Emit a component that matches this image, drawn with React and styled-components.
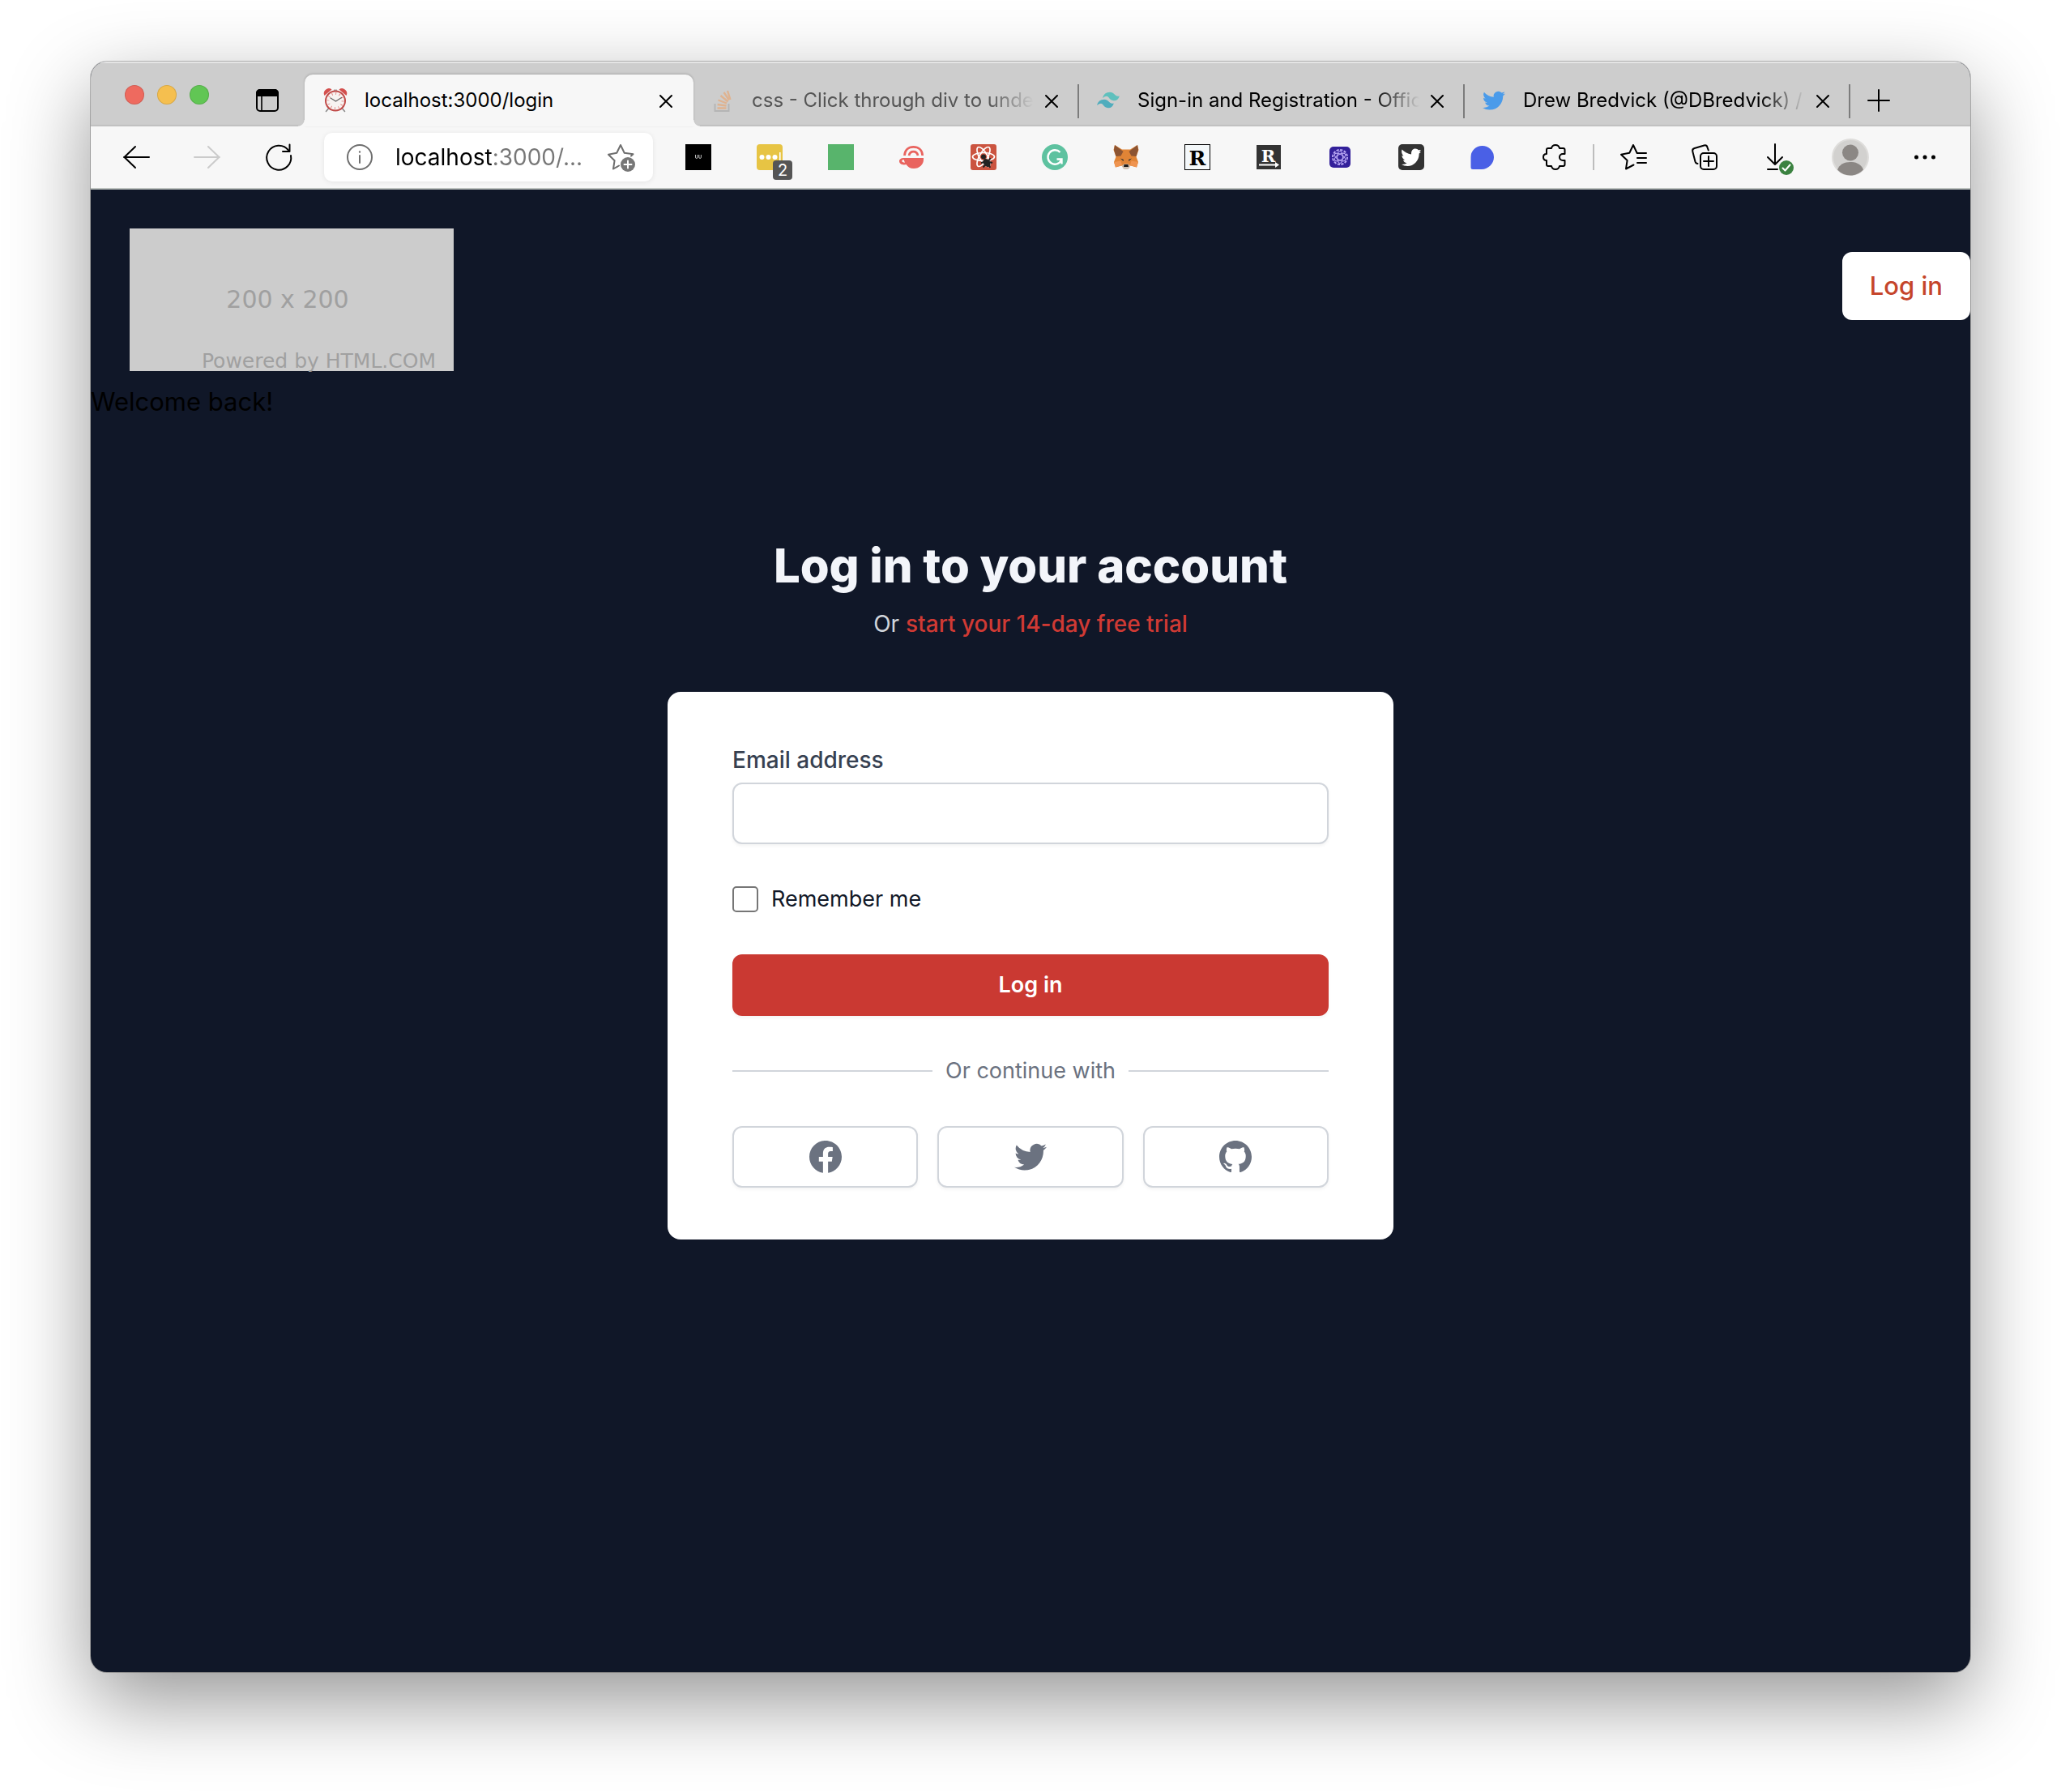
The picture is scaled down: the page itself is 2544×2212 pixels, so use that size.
import React from 'react';
import styled, { createGlobalStyle, css } from 'styled-components';

const GlobalStyle = createGlobalStyle`
  *, *::before, *::after { box-sizing: border-box; }
  body {
    margin: 0;
    background: #fff;
    font-family: Inter, 'Liberation Sans', sans-serif;
    -webkit-font-smoothing: antialiased;
  }
  button, input { font-family: inherit; }
  svg { display: block; flex: none; overflow: visible; }
`;

/* ---------- window ---------- */

const Desktop = styled.div`
  min-height: 100vh;
  padding: 76px 112px 148px;
  display: flex;
  flex-direction: column;
`;

const Window = styled.div`
  flex: 1;
  display: flex;
  flex-direction: column;
  border-radius: 20px;
  overflow: hidden;
  background: #101728;
  box-shadow: 0 0 0 1px rgba(0, 0, 0, 0.24), 0 36px 100px rgba(0, 0, 0, 0.42);
`;

const plainButton = css`
  appearance: none;
  border: 0;
  padding: 0;
  background: none;
  color: inherit;
  cursor: pointer;
`;

/* ---------- tab strip ---------- */

const TabStrip = styled.div`
  height: 80px;
  display: flex;
  align-items: center;
  padding-left: 42px;
  background: #cdcdcd;
  box-shadow: inset 0 2px 0 #e4e4e4, inset 0 -2px 2px -1px #b4b4b4;
`;

const TrafficLights = styled.div`
  display: flex;
  gap: 16px;
  margin: 2px 26px 0 0;
`;

const Light = styled.button`
  ${plainButton}
  width: 24px;
  height: 24px;
  border-radius: 50%;
  background: ${(p) => p.$color};
  box-shadow: inset 0 0 0 1px rgba(0, 0, 0, 0.12);
`;

const StripButton = styled.button`
  ${plainButton}
  display: flex;
  align-items: center;
  justify-content: center;
  align-self: flex-end;
  width: ${(p) => p.$width}px;
  height: 64px;
`;

const Tab = styled.div`
  position: relative;
  align-self: flex-end;
  flex: 0 1 476px;
  min-width: 0;
  height: 64px;
  display: flex;
  align-items: center;
  padding: 0 26px 0 20px;

  ${(p) =>
    p.$divider &&
    css`
      &::after {
        content: '';
        position: absolute;
        right: 0;
        top: 12px;
        width: 2px;
        height: 42px;
        background: #7c7c7c;
      }
    `}

  ${(p) =>
    p.$active &&
    css`
      flex-basis: 480px;
      padding: 0 26px 0 22px;
      background: #f7f7f7;
      border-radius: 10px 10px 0 0;
      box-shadow: 0 -1px 3px rgba(0, 0, 0, 0.18);

      &::before,
      &::after {
        content: '';
        position: absolute;
        bottom: 0;
        width: 8px;
        height: 8px;
      }
      &::before {
        left: -8px;
        background: radial-gradient(circle at 0 0, transparent 7px, #f7f7f7 8px);
      }
      &::after {
        right: -8px;
        background: radial-gradient(circle at 100% 0, transparent 7px, #f7f7f7 8px);
      }
    `}
`;

const TabTitle = styled.button`
  ${plainButton}
  flex: 1;
  min-width: 0;
  margin: 0 14px 0 20px;
  overflow: hidden;
  white-space: nowrap;
  text-align: left;
  font-size: 24px;
  line-height: 32px;
  color: ${(p) => (p.$muted ? '#555' : '#000')};
  ${(p) =>
    p.$fade &&
    css`
      mask-image: linear-gradient(to right, #000 calc(100% - 56px), transparent);
    `}
`;

const CloseButton = styled.button`
  ${plainButton}
  padding-top: 2px;
`;

/* ---------- toolbar ---------- */

const Toolbar = styled.div`
  height: 78px;
  display: flex;
  align-items: center;
  padding: 0 12px;
  background: #f7f7f7;
  border-bottom: 2px solid #bcc1be;
`;

const ToolButton = styled.button`
  ${plainButton}
  position: relative;
  flex: 0 0 ${(p) => (p.$wide ? 96 : 88)}px;
  height: 64px;
  display: flex;
  align-items: center;
  justify-content: center;
  color: ${(p) => (p.$dim ? '#cbcbcb' : '#000')};
`;

const CountBadge = styled.span`
  position: absolute;
  left: 48px;
  top: 36px;
  width: 24px;
  height: 24px;
  border-radius: 4px;
  background: #555;
  color: #fff;
  font-size: 20px;
  line-height: 24px;
  text-align: center;
`;

const AddressBar = styled.div`
  flex: 1;
  min-width: 200px;
  height: 60px;
  margin: 0 12px;
  padding: 0 24px 0 28px;
  display: flex;
  align-items: center;
  border-radius: 10px;
  background: #fff;
  box-shadow: 0 1px 6px rgba(0, 0, 0, 0.08);
  color: #6e6e6e;
`;

const AddressInput = styled.input`
  flex: 1;
  min-width: 0;
  margin: 0 16px 0 28px;
  padding: 0;
  border: 0;
  outline: 0;
  font-size: 28px;
  line-height: 40px;
  color: #000;
  background: linear-gradient(to right, #000 121px, #777 121px);
  background-clip: text;
  -webkit-text-fill-color: transparent;
`;

const Separator = styled.span`
  flex: none;
  width: 2px;
  height: 32px;
  margin: 0 4px;
  background: #bdbdbd;
`;

/* ---------- page ---------- */

const Header = styled.header`
  display: flex;
  align-items: center;
  justify-content: space-between;
  height: 238px;
  padding-left: 48px;
`;

const Placeholder = styled.div`
  display: flex;
  flex-direction: column;
  justify-content: flex-end;
  width: 400px;
  height: 176px;
  margin-top: 34px;
  background: #ccc;
  color: #a0a0a0;
  font-family: 'DejaVu Sans', sans-serif;
`;

const PlaceholderSize = styled.span`
  padding-right: 10px;
  font-size: 30px;
  line-height: 32px;
  text-align: center;
`;

const PlaceholderCredit = styled.span`
  margin-top: 48px;
  padding-right: 22px;
  font-size: 25px;
  line-height: 24px;
  text-align: right;
`;

const HeaderLink = styled.a`
  padding: 18px 34px;
  border-radius: 12px;
  background: #fff;
  color: #c5452b;
  font-size: 31px;
  line-height: 48px;
  font-weight: 500;
  text-decoration: none;
`;

const Welcome = styled.p`
  margin: 0;
  font-size: 31px;
  line-height: 48px;
  color: #000;
`;

const Main = styled.main`
  padding: 142px 64px 96px;
`;

const Title = styled.h1`
  margin: 0;
  text-align: center;
  font-size: 58px;
  line-height: 72px;
  font-weight: 800;
  color: #f3f5fa;
`;

const Subtitle = styled.p`
  margin: 16px 0 64px;
  text-align: center;
  font-size: 28px;
  line-height: 40px;
  color: #d1d5db;
`;

const TrialLink = styled.a`
  font-weight: 500;
  color: #d03a34;
  text-decoration: none;
`;

const Card = styled.section`
  max-width: 896px;
  margin: 0 auto;
  padding: 64px 80px;
  border-radius: 16px;
  background: #fff;
`;

const Label = styled.label`
  display: block;
  margin-bottom: 8px;
  font-size: 28px;
  line-height: 40px;
  font-weight: 500;
  color: #374151;
`;

const boxed = css`
  border: 2px solid #d1d5db;
  border-radius: 12px;
  background: #fff;
  box-shadow: 0 2px 4px rgba(0, 0, 0, 0.05);
`;

const TextInput = styled.input`
  ${boxed}
  display: block;
  width: 100%;
  height: 76px;
  padding: 16px 24px;
  font-size: 28px;
`;

const CheckRow = styled.div`
  display: flex;
  align-items: center;
  gap: 16px;
  margin: 48px 0;
`;

const Checkbox = styled.input`
  appearance: none;
  width: 32px;
  height: 32px;
  margin: 0;
  border: 2px solid #767676;
  border-radius: 5px;
  background: #fff;
`;

const CheckLabel = styled.label`
  font-size: 27px;
  line-height: 40px;
  color: #111827;
`;

const Submit = styled.button`
  ${plainButton}
  display: block;
  width: 100%;
  height: 76px;
  border-radius: 12px;
  background: #ca3932;
  box-shadow: 0 2px 4px rgba(0, 0, 0, 0.05);
  color: #fff;
  font-size: 27px;
  line-height: 40px;
  font-weight: 600;
`;

const OrRule = styled.div`
  display: flex;
  align-items: center;
  gap: 16px;
  margin: 48px 0;
  font-size: 27px;
  line-height: 40px;
  color: #6b7280;

  &::before,
  &::after {
    content: '';
    flex: 1;
    height: 2px;
    background: #d1d5db;
  }
`;

const SocialRow = styled.div`
  display: grid;
  grid-template-columns: repeat(3, 1fr);
  gap: 24px;
`;

const SocialLink = styled.a`
  ${boxed}
  height: 76px;
  display: flex;
  align-items: center;
  justify-content: center;
  color: #6b7280;
`;

/* ---------- icons ---------- */

const Svg = ({ size = 32, box = 32, children, ...rest }) => (
  <svg width={size} height={size} viewBox={`0 0 ${box} ${box}`} fill="none" aria-hidden="true" {...rest}>
    {children}
  </svg>
);

const Line = (props) => (
  <Svg stroke="currentColor" strokeWidth="2" strokeLinecap="round" strokeLinejoin="round" {...props} />
);

const BIRD =
  'M6.29 18.251c7.547 0 11.675-6.253 11.675-11.675 0-.178 0-.355-.012-.53A8.348 8.348 0 0020 3.92a8.19 8.19 0 01-2.357.646 4.118 4.118 0 001.804-2.27 8.224 8.224 0 01-2.605.996 4.107 4.107 0 00-6.993 3.743 11.65 11.65 0 01-8.457-4.287 4.106 4.106 0 001.27 5.477A4.073 4.073 0 01.8 7.713v.052a4.105 4.105 0 003.292 4.022 4.095 4.095 0 01-1.853.07 4.108 4.108 0 003.834 2.85A8.233 8.233 0 010 16.407a11.616 11.616 0 006.29 1.84';

const FacebookIcon = () => (
  <Svg size={40} box={20}>
    <path
      fill="currentColor"
      fillRule="evenodd"
      d="M20 10c0-5.523-4.477-10-10-10S0 4.477 0 10c0 4.991 3.657 9.128 8.438 9.878v-6.987h-2.54V10h2.54V7.797c0-2.506 1.492-3.89 3.777-3.89 1.094 0 2.238.195 2.238.195v2.46h-1.26c-1.243 0-1.63.771-1.63 1.562V10h2.773l-.443 2.89h-2.33v6.988C16.343 19.128 20 14.991 20 10z"
    />
  </Svg>
);

const TwitterIcon = () => (
  <Svg size={40} box={20}>
    <path fill="currentColor" d={BIRD} />
  </Svg>
);

const GithubIcon = () => (
  <Svg size={40} box={20}>
    <path
      fill="currentColor"
      fillRule="evenodd"
      d="M10 0C4.477 0 0 4.484 0 10.017c0 4.425 2.865 8.18 6.839 9.504.5.092.682-.217.682-.483 0-.237-.008-.868-.013-1.703-2.782.605-3.369-1.343-3.369-1.343-.454-1.158-1.11-1.466-1.11-1.466-.908-.62.069-.608.069-.608 1.003.07 1.531 1.032 1.531 1.032.892 1.53 2.341 1.088 2.91.832.092-.647.35-1.088.636-1.338-2.22-.253-4.555-1.113-4.555-4.951 0-1.093.39-1.988 1.029-2.688-.103-.253-.446-1.272.098-2.65 0 0 .84-.27 2.75 1.026A9.564 9.564 0 0110 4.844c.85.004 1.705.115 2.504.337 1.909-1.296 2.747-1.027 2.747-1.027.546 1.379.203 2.398.1 2.651.64.7 1.028 1.595 1.028 2.688 0 3.848-2.339 4.695-4.566 4.942.359.31.678.921.678 1.856 0 1.338-.012 2.419-.012 2.747 0 .268.18.58.688.482A10.019 10.019 0 0020 10.017C20 4.484 15.522 0 10 0z"
    />
  </Svg>
);

const SidebarIcon = () => (
  <Line size={28} box={28}>
    <rect x="1" y="1" width="26" height="26" rx="4" />
    <path d="M1 8V5a4 4 0 0 1 4-4h18a4 4 0 0 1 4 4v3z" fill="currentColor" />
    <path d="M7 8v19" strokeWidth="1.6" />
  </Line>
);

const CloseIcon = () => (
  <Line size={16} box={16}>
    <path d="M1 1l14 14M15 1L1 15" />
  </Line>
);

const PlusIcon = () => (
  <Line size={28} box={28}>
    <path d="M14 1v26M1 14h26" />
  </Line>
);

const ClockIcon = () => (
  <Svg>
    <path d="M7.500 26l-3 3.500M24.500 26l3 3.500" stroke="#8a8a8a" strokeWidth="1.600" strokeLinecap="round" />
    <path d="M2.500 10a6 6 0 0 1 9-7.500zM29.500 10a6 6 0 0 0-9-7.500z" fill="#d4504e" />
    <path d="M14 2.500h4v3h-4z" fill="#a9a3a2" />
    <circle cx="16" cy="16.500" r="12" fill="#f7f3f1" stroke="#c04a48" strokeWidth="2" />
    <circle cx="16" cy="16.500" r="9" stroke="#e08583" strokeWidth="3" strokeDasharray=".9 3.810" />
    <path d="M10 13l6.500 4 7-4.500" stroke="#666" strokeWidth="1.200" strokeLinecap="round" />
  </Svg>
);

const StackIcon = () => (
  <Svg>
    <path d="M6.500 20v9h17v-9" stroke="#b5b5b5" strokeWidth="2" />
    <g stroke="#dfb391" strokeWidth="2.4">
      <path d="M9.500 25.500h11M9.600 21l11 1.500M10.500 15.500l10.500 4M13.500 10l9 7.500M17.500 6l6.500 9.500M22 4l3.500 11" />
    </g>
  </Svg>
);

const TailwindIcon = () => (
  <Svg>
    <path
      d="M9 13q1.800-7.200 9-7.200c5.400 0 5.400 4.500 10 5 1 .1 1.700-.2 2-.6q-2 6.500-7.500 6-4-.5-6-4t-7.500.8z"
      fill="#5fc0bd"
    />
    <path
      d="M2 22q1.800-7.200 9-7.200c5.400 0 5.400 4.500 10 5 1 .1 1.700-.2 2-.6q-2 6.500-7.500 6-4-.5-6-4t-7.500.8z"
      fill="#50adbd"
    />
  </Svg>
);

const BlueBirdIcon = () => (
  <Svg box={22.8}>
    <g transform="translate(1.400 1.400)">
      <path fill="#4a9bea" d={BIRD} />
    </g>
  </Svg>
);

const BackIcon = () => (
  <Line>
    <path d="M1 16h31M15 3L1.500 16 15 29" />
  </Line>
);

const ForwardIcon = () => (
  <Line>
    <path d="M0 16h31M17 3l13.500 13L17 29" />
  </Line>
);

const ReloadIcon = () => (
  <Line>
    <path d="M31 14A15 15 0 1 1 28 7.400" />
    <path d="M29.500.500V9H21" />
  </Line>
);

const InfoIcon = () => (
  <Line>
    <circle cx="16" cy="16" r="15" />
    <path d="M16 14v9" />
    <circle cx="16" cy="9.500" r=".6" fill="currentColor" strokeWidth="1.200" />
  </Line>
);

const AddFavoriteIcon = () => (
  <Line>
    <path d="M14 26.500L7 30.500l1.600-10.300L1 12.700l10.300-2L16 1l4.700 9.700L31.500 12.300 29 14.500" />
    <circle cx="25" cy="25" r="9" fill="#777" stroke="none" />
    <path d="M25 20.500v9M20.500 25h9" stroke="#fff" />
  </Line>
);

const BlackIcon = () => (
  <Svg>
    <path fill="#000" d="M0 0h32v32H0z" />
    <path d="M12.500 13v3q0 1.500 1.300 1.500t1.300-1.500v-3M16.800 13v3q0 1.500 1.300 1.500t1.300-1.500v-3" stroke="#bbb" strokeWidth="1" />
  </Svg>
);

const PasswordIcon = () => (
  <Svg>
    <rect width="32" height="32" rx="4" fill="#e7c444" />
    <g fill="#fff">
      <circle cx="6.500" cy="16" r="3" />
      <circle cx="14.500" cy="16" r="3" />
      <circle cx="22.500" cy="16" r="3" />
      <path d="M28 10h1.600v12H28z" />
    </g>
  </Svg>
);

const GreenIcon = () => (
  <Svg>
    <path fill="#58b46c" d="M0 0h32v32H0z" />
  </Svg>
);

const CoffeeIcon = () => (
  <Svg>
    <path d="M6.500 14C7 7 11.500 3.400 17.500 3.400S28.300 7 28.700 14M12 14c.8-3.600 2.800-4.800 5.500-4.800S22.200 10.400 23 14" stroke="#e9645f" strokeWidth="2.800" />
    <path d="M6 17h24v2c0 6-5 11-12 11-4.500 0-7.500-2-9.500-5-4 1.200-8.500-.5-8.500-4 0-2.500 2.500-4 6-4z" fill="#e9645f" />
    <path d="M5.500 19c-3 .3-3.500 3.500 1.500 3.800z" fill="#f7f7f7" />
  </Svg>
);

const ReactBugIcon = () => (
  <Svg>
    <rect width="32" height="32" rx="3" fill="#cb5440" />
    <g stroke="#fff" strokeWidth="1.700">
      <ellipse cx="16" cy="15.500" rx="13.500" ry="5" />
      <ellipse cx="16" cy="15.500" rx="13.500" ry="5" transform="rotate(60 16 15.500)" />
      <ellipse cx="16" cy="15.500" rx="13.500" ry="5" transform="rotate(120 16 15.500)" />
    </g>
    <circle cx="16" cy="15.500" r="3" fill="#222" />
    <ellipse cx="20" cy="23" rx="4" ry="5.500" transform="rotate(-35 20 23)" fill="#222" />
    <path d="M13 23l4-1M15.500 28.500l3-3.500M24.500 17l-2 3.500M27 23l-4-1M22.500 24l1.500 5" stroke="#222" strokeWidth="2" />
  </Svg>
);

const GrammarlyIcon = () => (
  <Svg>
    <circle cx="16" cy="16" r="16" fill="#5ec2a0" />
    <path d="M22.500 10A8.700 8.700 0 1 0 24 19.800M18.500 18.500H24.500V24.500" stroke="#fff" strokeWidth="2.400" />
  </Svg>
);

const FoxIcon = () => (
  <Svg>
    <path d="M2 1l9 5.500h10L30 1l1.500 6-3 8.500L31 22l-2 6.500-7.500-2L18.500 30h-5l-3-3.500-7.500 2L1 22l2.500-6.500L.5 7z" fill="#e08436" />
    <path d="M2 1l10.500 8-3 5.500-6 .5L1 7zM30 1L19.500 9l3 5.500 6 .5L31 7z" fill="#8c5432" />
    <path d="M1 22l8.500-1.500L11 26l-8 2.500zM31 22l-8.500-1.500L21 26l8 2.500z" fill="#ef9450" />
    <path d="M9 17.500l4 1.500-.5 2zM23 17.500L19 19l.5 2z" fill="#333" />
    <path d="M11 26.500l2.500-2h5l2.500 2-1 3-2 1.500h-4L12 29.500z" fill="#d0c2b4" />
    <path d="M13.500 25h5l.5 3h-6z" fill="#1c1c1c" />
  </Svg>
);

const letterStyle = { fontFamily: "'DejaVu Serif', serif", fontWeight: 700 };

const ReaderIcon = () => (
  <Svg>
    <rect x=".5" y=".5" width="31" height="31" fill="#f4f8fa" stroke="#000" />
    <text x="16" y="25.500" textAnchor="middle" fontSize="25" fill="#000" style={letterStyle}>R</text>
  </Svg>
);

const ReaderArrowIcon = () => (
  <Svg>
    <rect x="1" y="1" width="30" height="30" fill="#333" />
    <text x="15.500" y="21.500" textAnchor="middle" fontSize="21" fill="#fff" style={letterStyle}>R</text>
    <path d="M4 25.500h21" stroke="#fff" strokeWidth="2" />
    <path d="M24 22l5 3.500-5 3.500z" fill="#fff" />
  </Svg>
);

const GlobeIcon = () => (
  <Svg>
    <rect x="3" y="3" width="26" height="26" rx="5" fill="#33209a" />
    <g stroke="#b9a8f5" strokeWidth="1.100">
      <circle cx="16" cy="16" r="9" strokeDasharray="3.200 1.500" strokeWidth="2" />
      <ellipse cx="16" cy="16" rx="7.500" ry="3.500" transform="rotate(30 16 16)" />
      <ellipse cx="16" cy="16" rx="7.500" ry="3.500" transform="rotate(90 16 16)" />
      <ellipse cx="16" cy="16" rx="7.500" ry="3.500" transform="rotate(150 16 16)" />
    </g>
  </Svg>
);

const DarkBirdIcon = () => (
  <Svg>
    <rect width="32" height="32" rx="5" fill="#333" />
    <path
      d="M4.500 6.500c3.500 3.500 7 5 11.500 6-.3-4.500 2-7 5-7 1.800 0 3 .8 3.700 1.800l3.300-.3-2 2.300 2 .5-2.300 1.700C25.500 21 19 27 11.500 27c-3 0-5.500-.8-7.500-2 3 .2 5-.6 6.500-1.700-2.500-.5-4-2-4.500-3.800h2.200C5.500 18 4.500 16 4.500 14l2 .5C4.300 12.500 3.500 9 4.500 6.500z"
      fill="#fff"
    />
  </Svg>
);

const BlobIcon = () => (
  <Svg>
    <path d="M1.500 28.500V16A14 14 0 0 1 15.500 2 14.200 14.200 0 0 1 30 16C30 24 23 31 15 31H4a2.500 2.500 0 0 1-2.500-2.500z" fill="#4a60e6" />
  </Svg>
);

const PuzzleIcon = () => (
  <Line>
    <path d="M13 5C13.600 2.500 15.500 1 18 1s4.400 1.500 5 4h4.500a2 2 0 0 1 2 2v5H27a4 4 0 0 0 0 8h2.500v5a2 2 0 0 1-2 2H23c-.6 2.500-2.500 4-5 4s-4.400-1.500-5-4H9a2 2 0 0 1-2-2v-5c-2.500 0-4-1.800-4-4s1.500-4 4-4V7a2 2 0 0 1 2-2z" />
  </Line>
);

const FavoritesIcon = () => (
  <Line>
    <path d="M32 11H20.700L16 1l-4.700 9.700L1 12.700 8.600 20 7 30.500 16.500 25.500M21 17h11M21 23h11" />
  </Line>
);

const CollectionsIcon = () => (
  <Line>
    <rect x="11" y="11" width="20" height="20" rx="4" />
    <path d="M21 15v12M15 21h12" />
    <path d="M7.500 24C6 24 5 23 4.500 21.500L1.300 9C.8 7 1.800 5.500 3.600 5L15.500 1.500C17.500 1 19 2 19.500 3.800L20.800 7.500" />
  </Line>
);

const DownloadIcon = () => (
  <Line>
    <path d="M15 0v25M6 16l9 9 9-9M6 31h12" />
    <circle cx="29" cy="29" r="9" fill="#3b8240" stroke="none" />
    <path d="M24.500 29.500l3 3 6-7" stroke="#fff" />
  </Line>
);

const AvatarIcon = () => (
  <Svg size={46} box={46}>
    <circle cx="23" cy="23" r="22" fill="#d2d1cf" stroke="#dedddb" strokeWidth="2" />
    <circle cx="23" cy="17.500" r="10" fill="#8b8784" />
    <path d="M7 38.500C9.500 32 15.500 29 23 29s13.500 3 16 9.500A22 22 0 0 1 23 45.500 22 22 0 0 1 7 38.500z" fill="#8b8784" />
  </Svg>
);

const DotsIcon = () => (
  <Svg fill="currentColor">
    <circle cx="5.500" cy="16" r="2.500" />
    <circle cx="16" cy="16" r="2.500" />
    <circle cx="26.500" cy="16" r="2.500" />
  </Svg>
);

/* ---------- data ---------- */

const TABS = [
  { title: 'localhost:3000/login', Icon: ClockIcon, active: true },
  { title: 'css - Click through div to unde', Icon: StackIcon, muted: true, fade: true, divider: true },
  { title: 'Sign-in and Registration - Offic', Icon: TailwindIcon, fade: true, divider: true },
  { title: 'Drew Bredvick (@DBredvick) /', Icon: BlueBirdIcon, fade: true, divider: true },
];

const EXTENSIONS = [
  { name: 'Dark extension', Icon: BlackIcon },
  { name: 'Passwords', Icon: PasswordIcon, count: 2 },
  { name: 'Green extension', Icon: GreenIcon },
  { name: 'Coffee', Icon: CoffeeIcon },
  { name: 'React developer tools', Icon: ReactBugIcon },
  { name: 'Grammar check', Icon: GrammarlyIcon },
  { name: 'Wallet', Icon: FoxIcon },
  { name: 'Reader', Icon: ReaderIcon },
  { name: 'Send to reader', Icon: ReaderArrowIcon },
  { name: 'Network', Icon: GlobeIcon },
  { name: 'Twitter', Icon: DarkBirdIcon },
  { name: 'Chat', Icon: BlobIcon },
  { name: 'Extensions', Icon: PuzzleIcon },
];

const SOCIALS = [
  { name: 'Facebook', Icon: FacebookIcon },
  { name: 'Twitter', Icon: TwitterIcon },
  { name: 'GitHub', Icon: GithubIcon },
];

/* ---------- app ---------- */

const BrowserChrome = () => (
  <>
    <TabStrip>
      <TrafficLights>
        <Light $color="#ee6a5f" aria-label="Close window" />
        <Light $color="#f5bf4f" aria-label="Minimize window" />
        <Light $color="#61c654" aria-label="Zoom window" />
      </TrafficLights>
      <StripButton $width={92} aria-label="Vertical tabs">
        <SidebarIcon />
      </StripButton>
      {TABS.map(({ title, Icon, active, muted, fade, divider }) => (
        <Tab key={title} $active={active} $divider={divider}>
          <Icon />
          <TabTitle $muted={muted} $fade={fade}>{title}</TabTitle>
          <CloseButton aria-label={`Close ${title}`}>
            <CloseIcon />
          </CloseButton>
        </Tab>
      ))}
      <StripButton $width={70} aria-label="New tab">
        <PlusIcon />
      </StripButton>
    </TabStrip>
    <Toolbar>
      <ToolButton aria-label="Back"><BackIcon /></ToolButton>
      <ToolButton aria-label="Forward" $dim><ForwardIcon /></ToolButton>
      <ToolButton aria-label="Reload"><ReloadIcon /></ToolButton>
      <AddressBar>
        <InfoIcon />
        <AddressInput aria-label="Address" defaultValue="localhost:3000/..." />
        <AddFavoriteIcon />
      </AddressBar>
      {EXTENSIONS.map(({ name, Icon, count }) => (
        <ToolButton key={name} aria-label={name}>
          <Icon />
          {count && <CountBadge>{count}</CountBadge>}
        </ToolButton>
      ))}
      <Separator />
      <ToolButton aria-label="Favorites"><FavoritesIcon /></ToolButton>
      <ToolButton aria-label="Collections"><CollectionsIcon /></ToolButton>
      <ToolButton aria-label="Downloads"><DownloadIcon /></ToolButton>
      <ToolButton aria-label="Profile" $wide><AvatarIcon /></ToolButton>
      <ToolButton aria-label="More"><DotsIcon /></ToolButton>
    </Toolbar>
  </>
);

const LoginForm = () => (
  <Card>
    <form onSubmit={(e) => e.preventDefault()}>
      <Label htmlFor="email">Email address</Label>
      <TextInput id="email" type="email" />
      <CheckRow>
        <Checkbox id="remember" type="checkbox" />
        <CheckLabel htmlFor="remember">Remember me</CheckLabel>
      </CheckRow>
      <Submit type="submit">Log in</Submit>
    </form>
    <OrRule>Or continue with</OrRule>
    <SocialRow>
      {SOCIALS.map(({ name, Icon }) => (
        <SocialLink key={name} href="#" aria-label={`Sign in with ${name}`}>
          <Icon />
        </SocialLink>
      ))}
    </SocialRow>
  </Card>
);

export default function App() {
  return (
    <>
      <GlobalStyle />
      <Desktop>
        <Window>
          <BrowserChrome />
          <Header>
            <Placeholder>
              <PlaceholderSize>200 x 200</PlaceholderSize>
              <PlaceholderCredit>Powered by HTML.COM</PlaceholderCredit>
            </Placeholder>
            <HeaderLink href="#">Log in</HeaderLink>
          </Header>
          <Welcome>Welcome back!</Welcome>
          <Main>
            <Title>Log in to your account</Title>
            <Subtitle>
              Or <TrialLink href="#">start your 14-day free trial</TrialLink>
            </Subtitle>
            <LoginForm />
          </Main>
        </Window>
      </Desktop>
    </>
  );
}
